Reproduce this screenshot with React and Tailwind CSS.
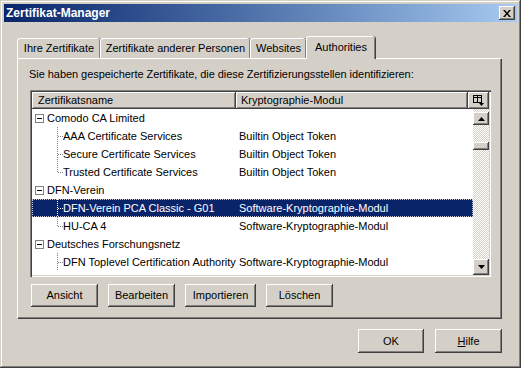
import React from "react";

const raised =
  "shadow-[inset_-1px_-1px_0_#404040,inset_1px_1px_0_#fff,inset_-2px_-2px_0_#808080,inset_2px_2px_0_#d4d0c8]";

const rows = [
  { kind: "group", name: "Comodo CA Limited" },
  { kind: "child", name: "AAA Certificate Services", mod: "Builtin Object Token" },
  { kind: "child", name: "Secure Certificate Services", mod: "Builtin Object Token" },
  { kind: "child", name: "Trusted Certificate Services", mod: "Builtin Object Token", last: true },
  { kind: "group", name: "DFN-Verein" },
  { kind: "child", name: "DFN-Verein PCA Classic - G01", mod: "Software-Kryptographie-Modul", selected: true },
  { kind: "child", name: "HU-CA 4", mod: "Software-Kryptographie-Modul", last: true },
  { kind: "group", name: "Deutsches Forschungsnetz" },
  { kind: "child", name: "DFN Toplevel Certification Authority", mod: "Software-Kryptographie-Modul" },
];

const MinusBox = () => (
  <svg width="9" height="9" className="shrink-0">
    <rect x="0.5" y="0.5" width="8" height="8" fill="#fff" stroke="#808080" />
    <line x1="2" y1="4.5" x2="7" y2="4.5" stroke="#000" />
  </svg>
);

const Connector = ({ last, light }) => (
  <svg width="31" height="18" className="shrink-0">
    <line x1="25.5" y1="0" x2="25.5" y2={last ? 9 : 18} stroke={light ? "#fff" : "#808080"} strokeDasharray="1 1" />
    <line x1="26" y1="9.5" x2="31" y2="9.5" stroke={light ? "#fff" : "#808080"} strokeDasharray="1 1" />
  </svg>
);

const TreeRow = ({ row }) => {
  if (row.kind === "group") {
    return (
      <div className="flex h-[18px] items-center pl-[3px]">
        <MinusBox />
        <span className="ml-[3px]">{row.name}</span>
      </div>
    );
  }
  return (
    <div
      className={`flex h-[18px] items-center ${
        row.selected ? "bg-[#0a246a] text-white outline outline-1 outline-dotted outline-offset-[-1px] outline-[#c8c8d8]" : ""
      }`}
    >
      <div className="flex w-[204px] items-center">
        <Connector last={row.last} light={row.selected} />
        <span className="whitespace-nowrap">{row.name}</span>
      </div>
      <span className="pl-[3px] whitespace-nowrap">{row.mod}</span>
    </div>
  );
};

const Button = ({ children, className = "" }) => (
  <button className={`flex h-[23px] items-center justify-center bg-[#d4d0c8] ${raised} ${className}`}>
    {children}
  </button>
);

const Tab = ({ children, width, selected }) => (
  <div
    className={`flex items-center justify-center rounded-t-[3px] border-l border-t border-white bg-[#d4d0c8] shadow-[inset_-1px_0_0_#808080,1px_0_0_#404040] ${width} ${
      selected ? "relative z-10 -mb-px h-[23px] pb-[2px]" : "h-[20px]"
    }`}
  >
    {children}
  </div>
);

export default function App() {
  return (
    <div className="h-[368px] w-[521px] bg-[#d4d0c8] p-[4px] font-['Liberation_Sans',Arial,sans-serif] text-[11px] text-black shadow-[inset_-1px_-1px_0_#404040,inset_1px_1px_0_#d4d0c8,inset_-2px_-2px_0_#808080,inset_2px_2px_0_#fff]">
      {/* title bar */}
      <div className="flex h-[18px] items-center justify-between bg-gradient-to-r from-[#0a246a] to-[#a6caf0] pl-[2px] pr-[2px]">
        <span className="text-[12px] font-bold text-white">Zertifikat-Manager</span>
        <div className={`flex h-[14px] w-[16px] items-center justify-center bg-[#d4d0c8] ${raised}`}>
          <svg width="8" height="7" viewBox="0 0 8 7">
            <path d="M0 0h2l2 2.5L6 0h2L5 3.5 8 7H6L4 4.5 2 7H0l3-3.5z" fill="#000" />
          </svg>
        </div>
      </div>

      {/* tabs */}
      <div className="ml-[13px] mt-[14px] flex items-end">
        <Tab width="w-[83px]">Ihre Zertifikate</Tab>
        <Tab width="w-[150px]">Zertifikate anderer Personen</Tab>
        <Tab width="w-[56px]">Websites</Tab>
        <Tab width="w-[69px]" selected>
          Authorities
        </Tab>
      </div>

      {/* tab panel */}
      <div className="ml-[13px] h-[260px] w-[484px] border-l border-t border-white pl-[11px] pr-[12px] pt-[8px] shadow-[inset_-1px_-1px_0_#808080,1px_1px_0_#404040]">
        <div className="h-[14px] leading-[14px] tracking-[-0.05px]">
          Sie haben gespeicherte Zertifikate, die diese Zertifizierungsstellen identifizieren:
        </div>

        {/* tree list */}
        <div className="ml-[1px] mt-[9px] h-[187px] w-[461px] bg-white p-[2px] shadow-[inset_1px_1px_0_#808080,inset_2px_2px_0_#404040,inset_-1px_-1px_0_#fff,inset_-2px_-2px_0_#d4d0c8]">
          <div className="flex h-[17px]">
            <div className={`flex w-[204px] items-center bg-[#d4d0c8] pl-[6px] ${raised}`}>Zertifikatsname</div>
            <div className={`flex w-[232px] items-center bg-[#d4d0c8] pl-[5px] ${raised}`}>Kryptographie-Modul</div>
            <div className={`flex w-[21px] items-center justify-center bg-[#d4d0c8] ${raised}`}>
              <svg width="11" height="11" viewBox="0 0 11 11">
                <rect x="0.5" y="0.5" width="8" height="7" fill="none" stroke="#000" />
                <line x1="0.5" y1="2.5" x2="8.5" y2="2.5" stroke="#000" />
                <line x1="4.5" y1="0.5" x2="4.5" y2="7.5" stroke="#000" />
                <path d="M6 8h5l-2.5 3z" fill="#000" />
              </svg>
            </div>
          </div>
          <div className="flex h-[166px]">
            <div className="w-[441px] overflow-hidden">
              {rows.map((r, i) => (
                <TreeRow key={i} row={r} />
              ))}
            </div>
            <div className="flex w-[16px] flex-col bg-[repeating-conic-gradient(#d4d0c8_0_25%,#fff_0_50%)] bg-[length:2px_2px]">
              <div className={`mt-[3px] flex h-[13px] items-center justify-center bg-[#d4d0c8] ${raised}`}>
                <svg width="7" height="4" viewBox="0 0 7 4">
                  <path d="M3.5 0L7 4H0z" fill="#000" />
                </svg>
              </div>
              <div className={`mt-[17px] h-[8px] bg-[#d4d0c8] ${raised}`} />
              <div className="flex-1" />
              <div className={`flex h-[16px] items-center justify-center bg-[#d4d0c8] ${raised}`}>
                <svg width="7" height="4" viewBox="0 0 7 4">
                  <path d="M0 0h7L3.5 4z" fill="#000" />
                </svg>
              </div>
            </div>
          </div>
        </div>

        {/* action buttons */}
        <div className="mt-[7px] flex gap-[10px] pl-[2px]">
          <Button className="w-[67px]">Ansicht</Button>
          <Button className="w-[67px]">Bearbeiten</Button>
          <Button className="w-[71px]">Importieren</Button>
          <Button className="w-[67px]">Löschen</Button>
        </div>
      </div>

      {/* dialog buttons */}
      <div className="mt-[11px] flex justify-end gap-[11px] pr-[15px]">
        <Button className="h-[24px] w-[66px]">OK</Button>
        <Button className="h-[24px] w-[67px]">
          <span>
            <span className="underline">H</span>ilfe
          </span>
        </Button>
      </div>
    </div>
  );
}
